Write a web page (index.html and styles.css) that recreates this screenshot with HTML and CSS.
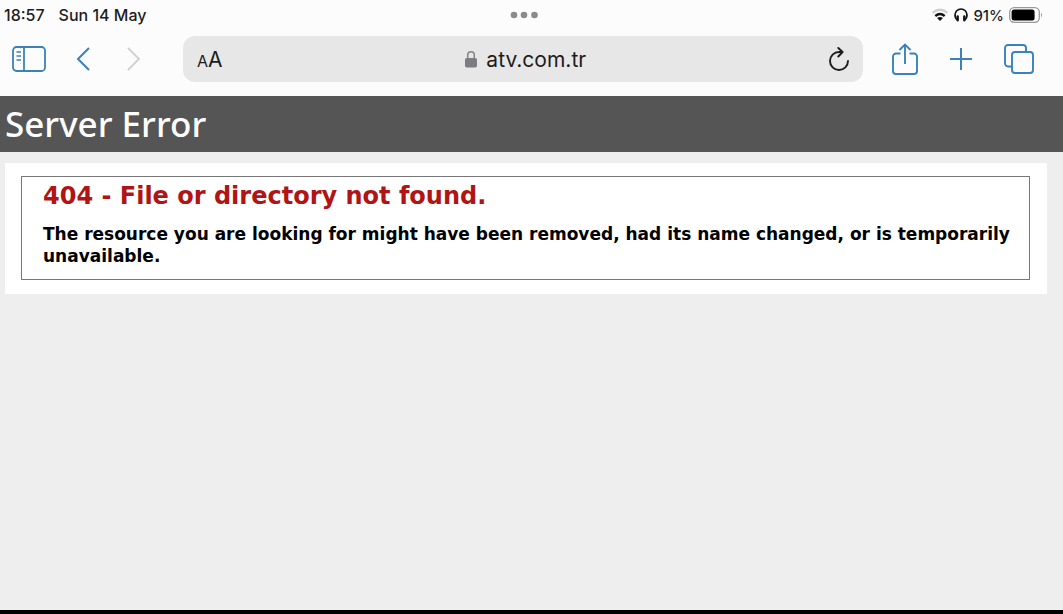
FILE: index.html
```html
<!DOCTYPE html>
<html lang="en">
<head>
  <meta charset="UTF-8">
  <meta name="viewport" content="width=device-width, initial-scale=1.0">
  <title>404 - File or directory not found.</title>
  <link rel="stylesheet" href="styles.css">
</head>
<body>
  <div class="browser">
    <div class="status">
      <div class="status-left"><span>18:57</span><span>Sun 14 May</span></div>
      <button class="dots" type="button" aria-label="Multitasking">
        <svg width="28" height="8" viewBox="0 0 28 8" fill="#8b8b8d"><circle cx="4" cy="4" r="3.3"/><circle cx="14" cy="4" r="3.3"/><circle cx="24.500" cy="4" r="3.3"/></svg>
      </button>
      <div class="status-right">
        <svg width="18" height="14" viewBox="0 0 18 14" fill="none" stroke-width="2.400"><path d="M1.600 4.800Q9-1.400 16.400 4.800" stroke="#cfcfd1"/><path d="M4.300 8Q9 4 13.700 8" stroke="#111"/><path d="M9 13 6 10Q9 7.800 12 10Z" fill="#111"/></svg>
        <svg width="14" height="14" viewBox="0 0 14 14" fill="none" stroke="#111"><path d="M3.800 12.200C1.800 11 1 9.200 1 7a6 6 0 0 1 12 0c0 2.200-.8 4-2.800 5.200" stroke-width="1.700"/><path d="M3.700 8.500v3.800M10.300 8.500v3.800" stroke-width="2.400" stroke-linecap="round"/></svg>
        <span>91%</span>
        <svg width="34" height="16" viewBox="0 0 34 16"><rect x=".7" y=".7" width="29.600" height="14.600" rx="4.500" fill="#fff" stroke="#98989a" stroke-width="1.300"/><rect x="2.600" y="2.600" width="23" height="10.800" rx="2.500"/><path d="M32 5.500q2 2.500 0 5z" fill="#98989a"/></svg>
      </div>
    </div>
    <nav class="toolbar">
      <div class="nav-buttons">
        <button type="button" aria-label="Sidebar">
          <svg width="34" height="26" viewBox="0 0 34 26" fill="none" stroke="#3b82b8" stroke-width="1.800"><rect x="1" y="1" width="32" height="24" rx="3.500"/><path d="M12 1v24"/><path d="M4.500 6h4.500M4.500 10h4.500M4.500 14h4.500" stroke-width="1.400"/></svg>
        </button>
        <button type="button" aria-label="Back">
          <svg width="14" height="24" viewBox="0 0 14 24" fill="none" stroke="#3b82b8" stroke-width="2"><path d="M13 1 2 12l11 11"/></svg>
        </button>
        <button type="button" aria-label="Forward" disabled>
          <svg width="14" height="24" viewBox="0 0 14 24" fill="none" stroke="#d0d0d2" stroke-width="1.800"><path d="m1 1 11 11L1 23"/></svg>
        </button>
      </div>
      <div class="address">
        <button class="text-size" type="button" aria-label="Text size"><small>A</small>A</button>
        <a class="site" href="#">
          <svg width="12" height="18" viewBox="0 0 12 18"><path d="M2.700 9V5a3.300 3.300 0 0 1 6.600 0v4" fill="none" stroke="#858588" stroke-width="1.500"/><rect y="8" width="12" height="9.500" rx="1.800" fill="#7d7d80"/></svg>
          atv.com.tr
        </a>
        <button class="reload" type="button" aria-label="Reload">
          <svg width="20" height="24" viewBox="0 0 20 24" fill="none" stroke="#1c1c1c" stroke-width="1.900" stroke-linecap="round" stroke-linejoin="round"><path d="M13.400 5H10a9 9 0 1 0 9 9M9.300 1l4.300 4-4.300 4.500"/></svg>
        </button>
      </div>
      <div class="tools">
        <button type="button" aria-label="Share">
          <svg width="26" height="32" viewBox="0 0 26 32" fill="none" stroke="#3b82b8" stroke-width="1.900"><path d="M8.500 10.500H4A3 3 0 0 0 1 13.500V28a3 3 0 0 0 3 3h18a3 3 0 0 0 3-3V13.500a3 3 0 0 0-3-3h-4.500M13 21V1.500M7.500 7 13 1.500 18.500 7"/></svg>
        </button>
        <button type="button" aria-label="New tab">
          <svg width="22" height="22" viewBox="0 0 22 22" stroke="#3b82b8" stroke-width="2"><path d="M11 0v22M0 11h22"/></svg>
        </button>
        <button type="button" aria-label="Tabs">
          <svg width="30" height="30" viewBox="0 0 30 30" fill="none" stroke="#3b82b8" stroke-width="1.900"><path d="M8 22.500H4A3 3 0 0 1 1 19.500V4a3 3 0 0 1 3-3h15a3 3 0 0 1 3 3v4"/><rect x="8" y="8" width="21" height="21" rx="3"/></svg>
        </button>
      </div>
    </nav>
  </div>
  <header><h1>Server Error</h1></header>
  <main class="content">
    <fieldset>
      <h2>404 - File or directory not found.</h2>
      <h3>The resource you are looking for might have been removed, had its name changed, or is temporarily unavailable.</h3>
    </fieldset>
  </main>
</body>
</html>
```

FILE: styles.css
```css
*{box-sizing:border-box}
body{margin:0;min-height:100vh;display:flex;flex-direction:column;background:#eee;border-bottom:4px solid #000;font-family:Verdana,"DejaVu Sans",sans-serif;color:#000}
button{display:flex;padding:0;border:0;background:none;color:inherit;font:inherit;cursor:pointer}
svg{display:block;flex:none}
.browser{height:96px;background:#fcfcfc;color:#1c1c1c;font-family:Inter,"Liberation Sans",sans-serif}
.status{display:grid;grid-template-columns:1fr auto 1fr;align-items:center;height:30px;padding:0 20px 0 4px;font-size:15px;font-weight:500}
.status-left{display:flex;gap:14px;font-size:16px}
.status-right{display:flex;justify-content:flex-end;align-items:center;gap:5px}
.toolbar{display:flex;align-items:center;height:58px;padding:0 29px 0 12px}
.nav-buttons{display:flex;align-items:center;width:171px}
.nav-buttons button{margin-right:30px}
.nav-buttons button + button{margin-right:37px}
.address{flex:1;display:flex;justify-content:space-between;align-items:center;height:46px;padding:0 14px;border-radius:12px;background:#e7e7e7}
.text-size{align-items:baseline;font-size:21px}
.text-size small{font-size:16px}
.site{display:flex;align-items:center;gap:9px;color:#1c1c1c;font-size:21px;text-decoration:none}
.tools{display:flex;align-items:center;gap:32px;margin-left:29px}
header{padding:6px 5px;background:#555;color:#fff}
h1{margin:0;font:500 35px/44px "Trebuchet MS","Noto Sans",sans-serif}
.content{margin:11px 16px 0 5px;padding:13px 17px 14px 16px;background:#fff}
fieldset{margin:0;padding:4px 12px 12px 21px;border:1px solid #777}
h2{margin:0 0 12px;color:#b01414;font-size:24px;line-height:30px}
h3{margin:0;font-size:17px;line-height:22px}
```
